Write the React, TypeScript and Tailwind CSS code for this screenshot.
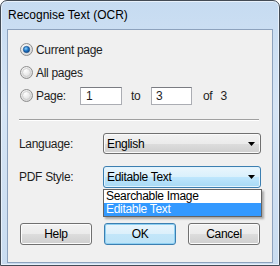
import React from 'react';

const font = { fontFamily: '"Liberation Sans", Arial, sans-serif' };

const Radio: React.FC<{ checked?: boolean }> = ({ checked }) => (
  <svg width="13" height="13" viewBox="0 0 13 13" className="shrink-0">
    <defs>
      <radialGradient id={checked ? 'rgOn' : 'rgOff'} cx="0.4" cy="0.35" r="0.7">
        <stop offset="0" stopColor="#ffffff" />
        <stop offset="1" stopColor="#d4d4d4" />
      </radialGradient>
      <radialGradient id="dot" cx="0.4" cy="0.35" r="0.7">
        <stop offset="0" stopColor="#8fd2ff" />
        <stop offset="0.5" stopColor="#1f78c8" />
        <stop offset="1" stopColor="#0a3f82" />
      </radialGradient>
    </defs>
    <circle cx="6.5" cy="6.5" r="6" fill={`url(#${checked ? 'rgOn' : 'rgOff'})`} stroke="#8f8f8f" />
    {checked ? <circle cx="6.5" cy="6.5" r="3.2" fill="url(#dot)" stroke="#1b4d85" strokeWidth="0.6" /> : <circle cx="6.5" cy="6.5" r="4" fill="none" stroke="#c9c9c9" strokeWidth="0.8" />}
  </svg>
);

const Arrow: React.FC = () => (
  <svg width="7" height="4" viewBox="0 0 7 4" className="shrink-0">
    <path d="M0 0h7L3.5 4z" fill="#000" />
  </svg>
);

const Btn: React.FC<{ label: string; primary?: boolean }> = ({ label, primary }) => (
  <div
    className={`w-[72px] h-[22px] rounded-[3px] border flex items-center justify-center text-[12px] text-black ${
      primary
        ? 'border-[#3c7fb1] bg-[linear-gradient(#e9f5fc_0%,#dcf0fb_50%,#c3e6f9_51%,#bde3f7_100%)] shadow-[inset_0_0_0_1px_#8fd0f2]'
        : 'border-[#707070] bg-[linear-gradient(#f2f2f2_0%,#ebebeb_50%,#dddddd_51%,#cfcfcf_100%)] shadow-[inset_0_0_0_1px_#fcfcfc]'
    }`}
  >
    {label}
  </div>
);

export default function App() {
  return (
    <div
      className="w-[280px] h-[266px] rounded-t-[7px] border border-[#434b55] bg-[linear-gradient(180deg,#c6dbf1_0%,#d6e5f5_40%,#c9dcf0_100%)] shadow-[inset_0_0_0_1px_#e8f1fb] flex flex-col text-[12px] tracking-[-0.3px] text-[#1e1e1e] overflow-hidden"
      style={font}
    >
      <div className="h-[28px] pl-[7px] flex items-center text-[12px] tracking-normal text-black">Recognise Text (OCR)</div>
      <div className="mx-[6px] h-[234px] border border-[#8da2bd] bg-[#f0f0f0] pl-[12px] pr-[10px] pt-[8px] relative">
        <div className="h-[23px] flex items-center gap-[3px]">
          <Radio checked />
          <span>Current page</span>
        </div>
        <div className="h-[23px] flex items-center gap-[3px]">
          <Radio />
          <span>All pages</span>
        </div>
        <div className="h-[23px] flex items-center">
          <Radio />
          <span className="ml-[3px] w-[44px]">Page:</span>
          <div className="w-[42px] h-[18px] border border-[#abadb3] border-t-[#7a7c82] bg-white pl-[5px] flex items-center">1</div>
          <span className="ml-[9px] w-[20px]">to</span>
          <div className="w-[41px] h-[18px] border border-[#abadb3] border-t-[#7a7c82] bg-white pl-[4px] flex items-center">3</div>
          <span className="ml-[11px]">of</span>
          <span className="ml-[8px]">3</span>
        </div>
        <div className="mt-[12px] -ml-[1px] w-[240px] border-t border-[#a0a0a0] border-b border-b-white" />
        <div className="mt-[12px] h-[21px] flex items-center -ml-[1px]">
          <span className="w-[84px]">Language:</span>
          <div className="w-[158px] h-[21px] rounded-[3px] border border-[#707070] bg-[linear-gradient(#f2f2f2_0%,#ebebeb_50%,#dddddd_51%,#cfcfcf_100%)] shadow-[inset_0_0_0_1px_#fafafa] flex items-center justify-between pl-[3px] pr-[5px] text-black">
            <span>English</span>
            <Arrow />
          </div>
        </div>
        <div className="mt-[12px] h-[22px] flex items-center -ml-[1px]">
          <span className="w-[84px]">PDF Style:</span>
          <div className="w-[158px] h-[22px] rounded-[3px] border border-[#3c7fb1] bg-[linear-gradient(#eaf6fd_0%,#d9f0fc_50%,#bee6fd_51%,#a7d9f5_100%)] shadow-[inset_0_0_0_1px_#e2f3fd] flex items-center justify-between pl-[3px] pr-[5px] text-black">
            <span>Editable Text</span>
            <Arrow />
          </div>
        </div>
        <div className="absolute left-[95px] top-[159px] w-[159px] border border-[#646464] bg-white shadow-[2px_2px_2px_rgba(0,0,0,0.3)] text-black">
          <div className="h-[13px] leading-[13px] pl-[2px]">Searchable Image</div>
          <div className="h-[13px] leading-[13px] pl-[2px] bg-[#3399ff] text-white">Editable Text</div>
        </div>
        <div className="mt-[35px] flex gap-[12px]">
          <Btn label="Help" />
          <Btn label="OK" primary />
          <Btn label="Cancel" />
        </div>
      </div>
    </div>
  );
}
